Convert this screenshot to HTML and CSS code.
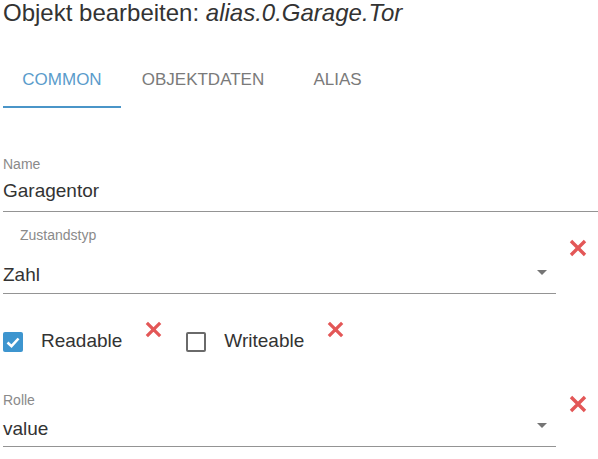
FILE: index.html
```html
<!DOCTYPE html>
<html lang="de">
<head>
<meta charset="utf-8">
<link rel="stylesheet" href="styles.css">
</head>
<body>
<div class="page">
  <h1 class="title">Objekt bearbeiten: <i>alias.0.Garage.Tor</i></h1>
  <div class="tabs">
    <div class="tab tab-common active">COMMON</div>
    <div class="tab tab-data">OBJEKTDATEN</div>
    <div class="tab tab-alias">ALIAS</div>
  </div>

  <div class="field field-full field-name">
    <div class="label">Name</div>
    <div class="value">Garagentor</div>
  </div>

  <div class="row row-type">
    <div class="field field-select">
      <div class="label label-indent">Zustandstyp</div>
      <div class="value">Zahl</div>
      <span class="arrow"></span>
    </div>
    <svg class="xicon" viewBox="0 0 20 20"><path d="M3 3 L17 17 M17 3 L3 17"/></svg>
  </div>

  <div class="checks">
    <span class="cb checked"><svg viewBox="0 0 20 20"><path d="M4.5 10.5 L8.5 14.2 L15.5 6.5"/></svg></span>
    <span class="cb-label">Readable</span>
    <svg class="xicon xsmall" viewBox="0 0 20 20"><path d="M3 3 L17 17 M17 3 L3 17"/></svg>
    <span class="cb"></span>
    <span class="cb-label">Writeable</span>
    <svg class="xicon xsmall" viewBox="0 0 20 20"><path d="M3 3 L17 17 M17 3 L3 17"/></svg>
  </div>

  <div class="row row-role">
    <div class="field field-select field-role">
      <div class="label">Rolle</div>
      <div class="value">value</div>
      <span class="arrow"></span>
    </div>
    <svg class="xicon" viewBox="0 0 20 20"><path d="M3 3 L17 17 M17 3 L3 17"/></svg>
  </div>
</div>
</body>
</html>
```

FILE: styles.css
```css
html, body {
  margin: 0;
  padding: 0;
  background: #ffffff;
}
body {
  font-family: "Liberation Sans", Arial, sans-serif;
  color: #333333;
  overflow: hidden;
}
.page {
  padding-left: 3px;
}
.title {
  margin: 0;
  font-size: 24px;
  line-height: 26px;
  font-weight: normal;
  color: #333333;
}
.title i {
  font-style: italic;
}
.tabs {
  display: flex;
  margin-top: 34px;
}
.tab {
  box-sizing: border-box;
  font-size: 17px;
  line-height: 18px;
  padding-top: 11px;
  padding-bottom: 17px;
  text-align: center;
  color: #7a7a7a;
  border-bottom: 2px solid transparent;
}
.tab-common { width: 118px; }
.tab-data { width: 164px; }
.tab-alias { width: 105px; }
.tab.active {
  color: #5a9ccb;
  border-bottom-color: #4a95c8;
}
.field {
  position: relative;
  border-bottom: 1px solid #949494;
}
.label {
  font-size: 14px;
  line-height: 16px;
  color: #8a8a8a;
}
.label-indent {
  padding-left: 17px;
}
.value {
  font-size: 19px;
  line-height: 22px;
  color: #333333;
}
.field-name {
  margin-top: 48px;
  padding-bottom: 9px;
}
.field-name .value {
  margin-top: 8px;
}
.row {
  display: flex;
  align-items: flex-start;
}
.row-type {
  margin-top: 15px;
}
.field-select {
  width: 553px;
  padding-bottom: 7px;
}
.row-type .value {
  margin-top: 21px;
}
.arrow {
  position: absolute;
  right: 9px;
  bottom: 18px;
  width: 0;
  height: 0;
  border-left: 5px solid transparent;
  border-right: 5px solid transparent;
  border-top: 5px solid #757575;
}
.xicon {
  width: 20px;
  height: 20px;
  margin-left: 12px;
  fill: none;
  stroke: #e35757;
  stroke-width: 3.4;
}
.row-type .xicon {
  margin-top: 11px;
}
.checks {
  display: flex;
  align-items: flex-start;
  margin-top: 26px;
}
.cb {
  box-sizing: border-box;
  width: 20px;
  height: 20px;
  margin-top: 12px;
  border: 2px solid #6a6a6a;
  border-radius: 2px;
}
.cb.checked {
  border: none;
  background: #3d95cf;
}
.cb svg {
  display: block;
  width: 20px;
  height: 20px;
  fill: none;
  stroke: #ffffff;
  stroke-width: 2.6;
}
.cb-label {
  font-size: 19px;
  line-height: 22px;
  margin-top: 10px;
  margin-left: 18px;
  color: #333333;
}
.xicon.xsmall {
  width: 19px;
  height: 19px;
  margin-left: 22px;
  margin-right: 23px;
}
.row-role {
  margin-top: 40px;
}
.field-role {
  padding-bottom: 6px;
}
.field-role .value {
  margin-top: 10px;
}
.row-role .xicon {
  margin-top: 2px;
}
```
